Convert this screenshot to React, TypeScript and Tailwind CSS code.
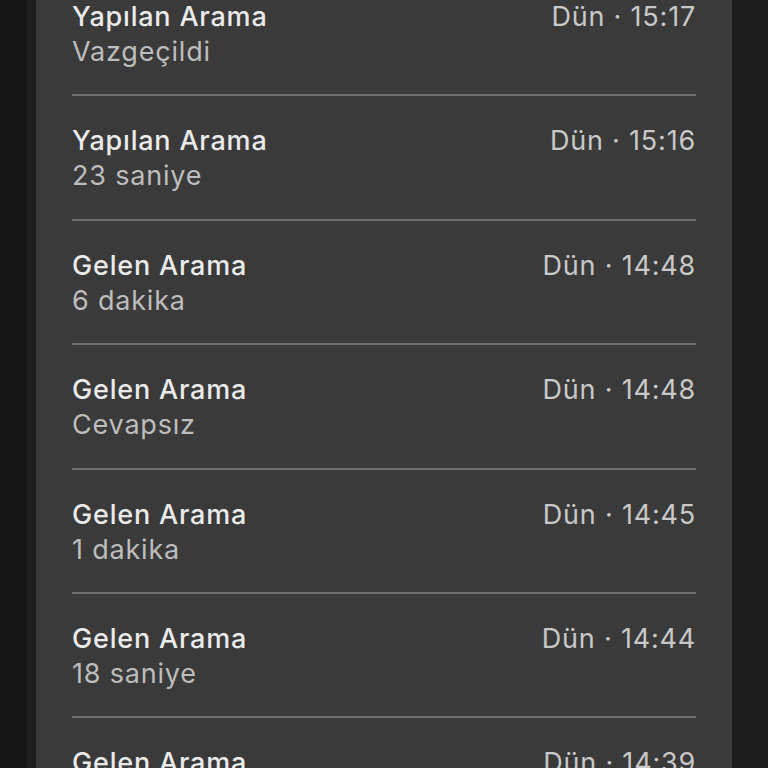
const calls = [
  { title: "Yapılan Arama", detail: "Vazgeçildi", time: "Dün · 15:17" },
  { title: "Yapılan Arama", detail: "23 saniye", time: "Dün · 15:16" },
  { title: "Gelen Arama", detail: "6 dakika", time: "Dün · 14:48" },
  { title: "Gelen Arama", detail: "Cevapsız", time: "Dün · 14:48" },
  { title: "Gelen Arama", detail: "1 dakika", time: "Dün · 14:45" },
  { title: "Gelen Arama", detail: "18 saniye", time: "Dün · 14:44" },
  { title: "Gelen Arama", detail: "12 saniye", time: "Dün · 14:39" },
];

export default function App() {
  return (
    <div
      className="flex h-[768px] w-[768px] overflow-hidden bg-[#1c1c1c]"
      style={{ fontFamily: "Inter, 'Noto Sans', sans-serif" }}
    >
      <div className="w-[27px] shrink-0 bg-[#161616]" />
      <div className="w-[9px] shrink-0 bg-[#1e1e1e]" />
      <div className="w-[696px] shrink-0 bg-[#3a3a3a]">
        <div className="-mt-[30px] pl-[36px] pr-[36px]">
          {calls.map((c, i) => (
            <div key={i}>
              <div className={i === 0 ? "h-[2px]" : "h-[2px] bg-[#6e6e6e]"} />
              <div className="h-[122.4px] pt-[29px] tracking-[0.8px]">
                <div className="flex items-center justify-between">
                  <span className="text-[27px] font-medium leading-[32px] text-[#eaeaea]">{c.title}</span>
                  <span className="text-[27px] leading-[32px] text-[#c8c8c8]">{c.time}</span>
                </div>
                <div className="mt-[3px] text-[27px] leading-[32px] text-[#bdbdbd]">{c.detail}</div>
              </div>
            </div>
          ))}
        </div>
      </div>
      <div className="flex-1 bg-[#1c1c1c]" />
    </div>
  );
}
